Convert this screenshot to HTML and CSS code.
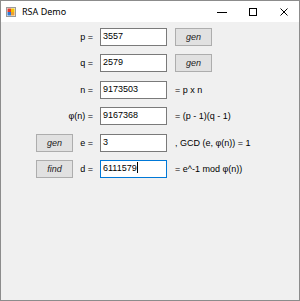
FILE: index.html
```html
<!DOCTYPE html>
<html lang="en">
<head>
  <meta charset="UTF-8">
  <title>RSA Demo</title>
  <link rel="stylesheet" href="styles.css">
</head>
<body>
  <div class="window">
    <!-- Title bar -->
    <div class="titlebar">
      <svg class="app-icon" width="10" height="10" viewBox="0 0 10 10">
        <rect x="0.5" y="0.5" width="9" height="9" fill="#f4f4f4" stroke="#9a9a9a"/>
        <rect x="1.5" y="1.5" width="3.5" height="3.5" fill="#e03c31"/>
        <rect x="5" y="1.5" width="3.5" height="3.5" fill="#f5c400"/>
        <rect x="1.5" y="5" width="3.5" height="3.5" fill="#2f78d2"/>
        <rect x="5" y="5" width="3.5" height="3.5" fill="#f0a030"/>
      </svg>
      <span class="title">RSA Demo</span>
      <div class="caption-buttons">
        <span class="caption-btn">
          <svg width="10" height="10" viewBox="0 0 10 10"><path d="M0 5.5h10" stroke="#000" stroke-width="1"/></svg>
        </span>
        <span class="caption-btn">
          <svg width="10" height="10" viewBox="0 0 10 10"><rect x="1.5" y="1.5" width="7" height="7" fill="none" stroke="#000"/></svg>
        </span>
        <span class="caption-btn">
          <svg width="10" height="10" viewBox="0 0 10 10"><path d="M1.5 1.5l7 7M8.5 1.5l-7 7" stroke="#000" stroke-width="1"/></svg>
        </span>
      </div>
    </div>

    <!-- Form -->
    <div class="client">
      <div class="form">
        <label class="label wide">p =</label>
        <div class="textbox">3557</div>
        <button class="btn extra">gen</button>

        <label class="label wide">q =</label>
        <div class="textbox">2579</div>
        <button class="btn extra">gen</button>

        <label class="label wide">n =</label>
        <div class="textbox">9173503</div>
        <span class="note extra">= p x n</span>

        <label class="label wide">φ(n) =</label>
        <div class="textbox">9167368</div>
        <span class="note extra">= (p - 1)(q - 1)</span>

        <button class="btn">gen</button>
        <label class="label">e =</label>
        <div class="textbox">3</div>
        <span class="note extra">, GCD (e, φ(n)) = 1</span>

        <button class="btn">find</button>
        <label class="label">d =</label>
        <div class="textbox focused">6111579<span class="caret"></span></div>
        <span class="note extra">= e^-1 mod φ(n))</span>
      </div>
    </div>
  </div>
</body>
</html>
```

FILE: styles.css
```css
body {
  margin: 0;
  font-family: "Liberation Sans", Arial, sans-serif;
  font-size: 9px;
  color: #000;
}

/* Window frame */
.window {
  width: 300px;
  height: 301px;
  box-sizing: border-box;
  border: 1px solid #8c8c8c;
  background: #f0f0f0;
  display: flex;
  flex-direction: column;
}

.titlebar {
  height: 21px;
  background: #fff;
  display: flex;
  align-items: center;
  padding-left: 5px;
}
.app-icon {
  margin-right: 6px;
}
.title {
  font-family: "Noto Sans", sans-serif;
  font-size: 9px;
  color: #000;
}
.caption-buttons {
  margin-left: auto;
  display: flex;
}
.caption-btn {
  width: 31px;
  height: 21px;
  display: flex;
  align-items: center;
  justify-content: center;
}

/* Client area */
.client {
  padding: 6px 0 0 35px;
}
.form {
  display: grid;
  grid-template-columns: 37px 27px 67px 1fr;
  grid-auto-rows: 18px;
  row-gap: 8.4px;
  align-items: center;
}

.label {
  grid-column: 2;
  text-align: right;
  padding-right: 7px;
  white-space: nowrap;
}
.label.wide {
  grid-column: 1 / 3;
}

.textbox {
  grid-column: 3;
  height: 18px;
  box-sizing: border-box;
  background: #fff;
  border: 1px solid #7a7a7a;
  padding-left: 2px;
  line-height: 15px;
}
.textbox.focused {
  border-color: #0078d7;
}
.caret {
  display: inline-block;
  width: 1px;
  height: 11px;
  background: #000;
  vertical-align: -2px;
}

.btn {
  height: 18px;
  width: 37px;
  margin: 0;
  padding: 0;
  background: #e1e1e1;
  border: 1px solid #adadad;
  font-family: inherit;
  font-size: 9px;
  font-style: italic;
  color: #222;
}

.extra {
  grid-column: 4;
  margin-left: 8px;
  justify-self: start;
}
.note {
  white-space: nowrap;
}
```
